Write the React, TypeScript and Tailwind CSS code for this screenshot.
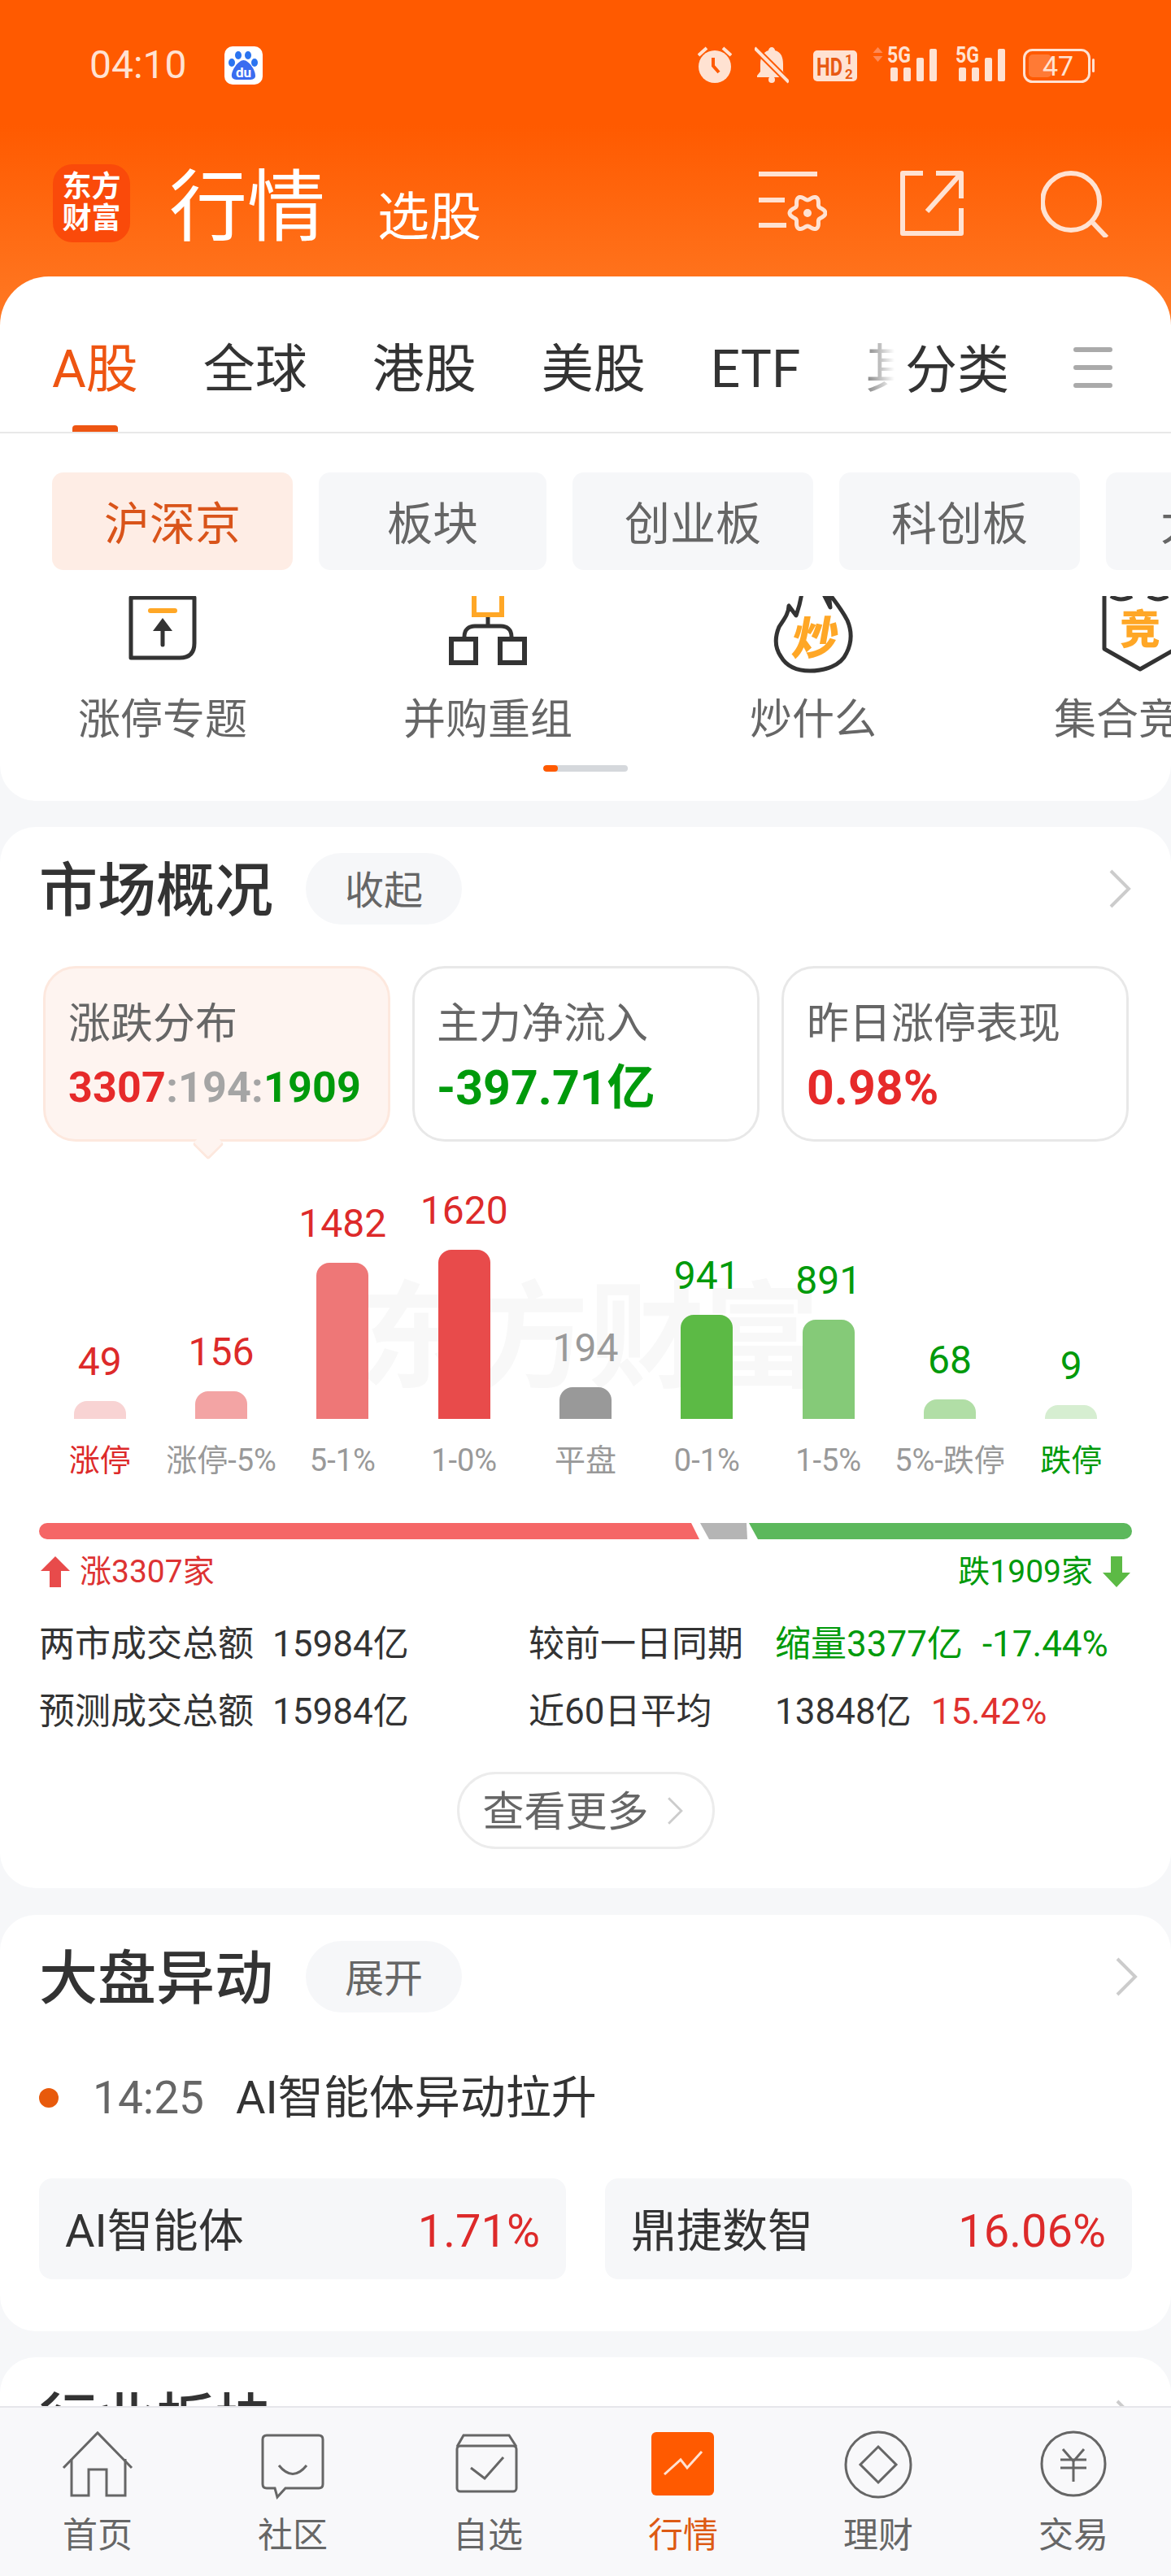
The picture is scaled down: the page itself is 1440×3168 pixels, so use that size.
import React from "react";

const cream = "#ffe2d2";

function gearPath(cx: number, cy: number) {
  const pts: string[] = [];
  for (let i = 0; i <= 120; i++) {
    const t = (i / 120) * Math.PI * 2;
    const r = 19 + 3 * Math.cos(6 * t);
    pts.push(`${i === 0 ? "M" : "L"}${(cx + r * Math.cos(t)).toFixed(2)} ${(cy + r * Math.sin(t)).toFixed(2)}`);
  }
  return pts.join(" ") + "Z";
}

function Chevron({ className }: { className: string }) {
  return (
    <svg viewBox="0 0 28 48" className={className} fill="none">
      <path d="M3 2L25 24L3 46" stroke="#cccccc" strokeWidth="4" />
    </svg>
  );
}

function Signal({ arrows }: { arrows: boolean }) {
  const off = arrows ? 18 : 0;
  return (
    <svg width={arrows ? 79 : 61} height="50" viewBox={`0 0 ${arrows ? 79 : 61} 50`}>
      {arrows && (
        <>
          <path d="M6.5 3L12.5 10H0.5Z" fill="#ff8a55" />
          <path d="M6.5 21L12.5 14H0.5Z" fill="#ff8a55" />
        </>
      )}
      <text x={off} y="22" fontSize="28" fontWeight="700" fill={cream} textLength="29" lengthAdjust="spacingAndGlyphs">5G</text>
      {[0, 16, 32, 48].map((x, i) => (
        <rect key={x} x={x + off + 4} y={[28, 28, 16, 5][i]} width="9" height={[17, 17, 29, 40][i]} rx="2" fill={cream} />
      ))}
    </svg>
  );
}

function StatusBar() {
  return (
    <div className="flex items-center h-[50px] mt-[55px] pl-[110px] pr-[93px]">
      <span className="text-[48px] leading-[50px]" style={{ color: cream }}>04:10</span>
      <svg width="47" height="47" viewBox="0 0 47 47" className="ml-[46px]">
        <rect width="47" height="47" rx="10" fill="#ffffff" />
        <ellipse cx="9" cy="20" rx="4" ry="5" fill="#2b74f0" />
        <ellipse cx="17" cy="11" rx="4" ry="5" fill="#2b74f0" />
        <ellipse cx="29" cy="11" rx="4" ry="5" fill="#2b74f0" />
        <ellipse cx="37" cy="20" rx="4" ry="5" fill="#2b74f0" />
        <path d="M23.5 17C30 17 39 30 38 37C37 42 30 41 23.5 41C17 41 10 42 9 37C8 30 17 17 23.5 17Z" fill="#3a6cf0" />
        <text x="23.5" y="38" textAnchor="middle" fontSize="17" fontWeight="700" fill="#ffffff">du</text>
      </svg>
      <div className="ml-auto flex items-center">
        <svg width="42" height="50" viewBox="0 0 42 50">
          <ellipse cx="21" cy="27" rx="20" ry="20" fill={cream} />
          <path d="M1 13L11 4M41 13L31 4" stroke={cream} strokeWidth="4" />
          <path d="M19 16V26L26 34" stroke="#ff5a00" strokeWidth="4" fill="none" />
        </svg>
        <svg width="42" height="50" viewBox="0 0 42 50" className="ml-[28px]">
          <path d="M21 3C23 3 25 5 25 7C33 9 35 16 35 24V33L39 38V40H3V38L7 33V24C7 16 10 9 17 7C17 5 19 3 21 3Z" fill={cream} />
          <circle cx="21" cy="43" r="4" fill={cream} />
          <path d="M0 4L42 46" stroke="#ff5a00" strokeWidth="8" />
          <path d="M0 4L42 46" stroke={cream} strokeWidth="4" />
        </svg>
        <svg width="54" height="50" viewBox="0 0 54 50" className="ml-[30px]">
          <rect x="0" y="7" width="54" height="38" rx="5" fill={cream} />
          <text x="4" y="38" fontSize="32" fontWeight="700" fill="#e85a12" textLength="32" lengthAdjust="spacingAndGlyphs">HD</text>
          <text x="44" y="24" textAnchor="middle" fontSize="17" fontWeight="700" fill="#e85a12">1</text>
          <text x="44" y="42" textAnchor="middle" fontSize="17" fontWeight="700" fill="#e85a12">2</text>
        </svg>
        <div className="ml-[19px]"><Signal arrows /></div>
        <div className="ml-[23px]"><Signal arrows={false} /></div>
        <svg width="89" height="50" viewBox="0 0 89 50" className="ml-[22px]">
          <rect x="1.5" y="6.5" width="80" height="39" rx="10" fill="none" stroke={cream} strokeWidth="3" />
          <rect x="7" y="12" width="28" height="28" rx="5" fill="#ff7a35" />
          <text x="43" y="38" textAnchor="middle" fontSize="34" fill={cream}>47</text>
          <rect x="85" y="17" width="3" height="17" rx="1.5" fill={cream} />
        </svg>
      </div>
    </div>
  );
}

function Toolbar() {
  return (
    <div className="flex items-center mt-[97px] h-[96px] pl-[65px] pr-[76px]">
      <div className="w-[95px] h-[96px] rounded-[24px] bg-[#fa4a0a] flex flex-col items-center justify-center text-white font-bold text-[36px] leading-[39px]">
        <span>东方</span>
        <span>财富</span>
      </div>
      <span className="ml-[48px] mt-[10px] text-[96px] leading-[96px] text-white">行情</span>
      <span className="ml-[64px] mt-[36px] text-[64px] leading-[66px] text-white">选股</span>
      <div className="ml-auto flex items-center">
        <svg width="84" height="84" viewBox="0 0 84 84" fill="none" stroke={cream}>
          <path d="M0 6H72M0 38H32M0 69H34" strokeWidth="6" />
          <path d={gearPath(60, 54)} strokeWidth="5" />
          <circle cx="60" cy="54" r="5" fill={cream} stroke="none" />
        </svg>
        <svg width="84" height="84" viewBox="0 0 84 84" fill="none" stroke={cream} className="ml-[90px]">
          <path d="M28 5H3V79H75V48M44 5H75V36M75 5L33 52" strokeWidth="6" strokeLinejoin="round" />
        </svg>
        <svg width="84" height="84" viewBox="0 0 84 84" fill="none" stroke={cream} className="ml-[89px]">
          <circle cx="37" cy="40" r="35" strokeWidth="6" />
          <path d="M64 66L81 84" strokeWidth="6" />
        </svg>
      </div>
    </div>
  );
}

function Tabs() {
  const tabs = ["全球", "港股", "美股", "ETF", "其他"];
  return (
    <div className="relative flex items-center h-[193px] pt-[39px] border-b-2 border-[#e8e8e8] text-[64px] leading-[80px] text-[#333333] overflow-hidden">
      <div className="flex gap-[80px] pl-[64px] w-[1100px] shrink-0 overflow-hidden">
        <span className="text-[#ee5512] shrink-0">A股</span>
        {tabs.map((t) => (
          <span key={t} className="shrink-0">{t}</span>
        ))}
      </div>
      <div className="absolute left-[1065px] top-0 w-[35px] h-full bg-gradient-to-r from-white/40 to-white" />
      <div className="absolute left-[1100px] top-0 w-[20px] h-full bg-white" />
      <span className="absolute left-[1113px] top-[76px]">分类</span>
      <div className="absolute left-[1320px] top-[87px] w-[48px] flex flex-col gap-[16px]">
        <div className="h-[6px] rounded-full bg-[#aaaaaa]" />
        <div className="h-[6px] rounded-full bg-[#aaaaaa]" />
        <div className="h-[6px] rounded-full bg-[#aaaaaa]" />
      </div>
      <div className="absolute left-[89px] bottom-0 w-[56px] h-[8px] rounded-t-[4px] bg-[#ee5512]" />
    </div>
  );
}

function Chips() {
  const chips = [
    { t: "沪深京", w: "w-[296px]", a: true },
    { t: "板块", w: "w-[280px]", a: false },
    { t: "创业板", w: "w-[296px]", a: false },
    { t: "科创板", w: "w-[296px]", a: false },
  ];
  return (
    <div className="flex gap-[32px] mt-[48px] ml-[64px] w-[1376px] overflow-hidden">
      {chips.map((c) => (
        <div
          key={c.t}
          className={`${c.w} shrink-0 h-[120px] pt-[8px] rounded-[14px] flex items-center justify-center text-[56px] ${c.a ? "bg-[#feede5] text-[#d9541a]" : "bg-[#f6f7f9] text-[#666666]"}`}
        >
          {c.t}
        </div>
      ))}
      <div className="w-[200px] shrink-0 h-[120px] pt-[8px] rounded-[14px] bg-[#f6f7f9] pl-[67px] flex items-center text-[56px] text-[#666666] whitespace-nowrap">大盘</div>
    </div>
  );
}

function Shortcuts() {
  const box = "w-[96px] h-[96px]";
  const items = [
    {
      t: "涨停专题",
      i: (
        <svg viewBox="0 0 96 96" className={box} fill="none">
          <path d="M9 2H87V58Q87 76 69 76H9Z" stroke="#333333" strokeWidth="5" strokeLinejoin="round" />
          <path d="M33 18H63" stroke="#ffa726" strokeWidth="6" strokeLinecap="round" />
          <path d="M48 27L36 43H60Z" fill="#333333" />
          <path d="M48 40V60" stroke="#333333" strokeWidth="5" strokeLinecap="round" />
        </svg>
      ),
    },
    {
      t: "并购重组",
      i: (
        <svg viewBox="0 0 96 96" className={box} fill="none">
          <path d="M31 -6V23H65V-6" stroke="#ffa726" strokeWidth="6" />
          <path d="M48 26V37M19 50C19 41 25 37 32 37H64C71 37 77 41 77 50" stroke="#333333" strokeWidth="5" />
          <rect x="3" y="53" width="30" height="29" stroke="#333333" strokeWidth="6" />
          <rect x="63" y="53" width="30" height="29" stroke="#333333" strokeWidth="6" />
        </svg>
      ),
    },
    {
      t: "炒什么",
      i: (
        <svg viewBox="0 0 104 96" className="w-[104px] h-[96px]" fill="none">
          <path d="M38 -4C36 10 33 18 31 24L22 12C22 22 15 30 10 38C5 50 4 62 12 74C20 88 34 92 48 92C66 92 86 86 93 70C100 56 100 44 94 30C88 18 80 8 71 -4L73 14L64 -4" stroke="#333333" strokeWidth="5" strokeLinejoin="round" />
          <text x="52" y="72" textAnchor="middle" fontSize="56" fontWeight="900" fill="#ffa726" transform="skewX(-10) translate(12 0)">炒</text>
        </svg>
      ),
    },
    {
      t: "集合竞价",
      i: (
        <svg viewBox="0 0 96 96" className={box} fill="none">
          <path d="M6 -6V65L50 90L94 65V-6" stroke="#333333" strokeWidth="5" strokeLinejoin="round" />
          <path d="M14 0Q26 8 40 0M60 0Q72 8 84 0" stroke="#333333" strokeWidth="5" />
          <text x="50" y="59" textAnchor="middle" fontSize="50" fontWeight="900" fill="#ffa726">竞</text>
        </svg>
      ),
    },
  ];
  return (
    <div className="flex mt-[32px]">
      {items.map((it) => (
        <div key={it.t} className="w-[400px] shrink-0 flex flex-col items-center">
          <div className="h-[96px]">{it.i}</div>
          <span className="mt-[27px] text-[52px] leading-[60px] text-[#666666] whitespace-nowrap">{it.t}</span>
        </div>
      ))}
    </div>
  );
}

function SectionHead({ title, pill, right }: { title: string; pill?: string; right: string }) {
  return (
    <div className="flex items-center pl-[48px] pt-[32px] h-[120px]">
      <span className="text-[72px] leading-[80px] pt-[6px] font-medium text-[#333333]">{title}</span>
      {pill && (
        <span className="ml-[40px] w-[192px] h-[88px] pt-[5px] rounded-full bg-[#f6f7f9] flex items-center justify-center text-[48px] text-[#666666]">{pill}</span>
      )}
      <Chevron className={`ml-auto w-[28px] h-[48px] ${right}`} />
    </div>
  );
}

function SummaryCards() {
  const red = "text-[#e62a2a]";
  const green = "text-[#009a0b]";
  return (
    <div className="flex gap-[27px] ml-[53px] mt-[51px]">
      <div className="relative w-[427px] h-[216px] rounded-[40px] border-[3px] border-[#fde8de] bg-[#fef4f0] pl-[28px] pt-[36px]">
        <div className="text-[52px] leading-[66px] text-[#666666]">涨跌分布</div>
        <div className="mt-[12px] text-[52px] leading-[66px] font-bold tracking-[0.2px] whitespace-nowrap">
          <span className={red}>3307</span>
          <span className="text-[#a5a5a5]">:194:</span>
          <span className={green}>1909</span>
        </div>
        <div className="absolute left-[186px] bottom-[-20px] w-[28px] h-[28px] rotate-45 rounded-[4px] bg-[#fef4f0] border-r-[3px] border-b-[3px] border-[#fde8de]" />
      </div>
      <div className="w-[427px] h-[216px] rounded-[40px] border-[3px] border-[#e8e8e8] pl-[27px] pt-[36px]">
        <div className="text-[52px] leading-[66px] text-[#666666]">主力净流入</div>
        <div className={`mt-[12px] text-[59px] leading-[66px] font-bold ${green}`}>-397.71亿</div>
      </div>
      <div className="w-[427px] h-[216px] rounded-[40px] border-[3px] border-[#e8e8e8] pl-[28px] pt-[36px]">
        <div className="text-[52px] leading-[66px] text-[#666666]">昨日涨停表现</div>
        <div className={`mt-[12px] text-[59px] leading-[66px] font-bold ${red}`}>0.98%</div>
      </div>
    </div>
  );
}

const bars = [
  { v: "49", l: "涨停", h: 22, c: "#f8d3d3", vc: "#dd2a2a", lc: "#dd2a2a" },
  { v: "156", l: "涨停-5%", h: 34, c: "#f3a4a4", vc: "#dd2a2a", lc: "#999999" },
  { v: "1482", l: "5-1%", h: 192, c: "#ee7777", vc: "#dd2a2a", lc: "#999999" },
  { v: "1620", l: "1-0%", h: 208, c: "#e84b4b", vc: "#dd2a2a", lc: "#999999" },
  { v: "194", l: "平盘", h: 39, c: "#999999", vc: "#999999", lc: "#999999" },
  { v: "941", l: "0-1%", h: 128, c: "#5cba45", vc: "#009a0b", lc: "#999999" },
  { v: "891", l: "1-5%", h: 122, c: "#85ca78", vc: "#009a0b", lc: "#999999" },
  { v: "68", l: "5%-跌停", h: 24, c: "#b1dea6", vc: "#009a0b", lc: "#999999" },
  { v: "9", l: "跌停", h: 17, c: "#d6eed1", vc: "#009a0b", lc: "#009a0b" },
];

function Chart() {
  return (
    <div className="relative ml-[48px] mt-[46px] w-[1344px]">
      <div className="absolute left-[392px] top-[126px] text-[142px] leading-[142px] font-bold text-[#f8f8f8] whitespace-nowrap">东方财富</div>
      <div className="relative grid grid-cols-9 h-[295px] items-end">
        {bars.map((b) => (
          <div key={b.l} className="flex flex-col items-center">
            <span className="text-[48px] leading-[48px] mb-[24px]" style={{ color: b.vc }}>{b.v}</span>
            <div className="w-[64px] rounded-t-[16px]" style={{ height: b.h, backgroundColor: b.c }} />
          </div>
        ))}
      </div>
      <div className="relative grid grid-cols-9 mt-[26px]">
        {bars.map((b) => (
          <span key={b.l} className="text-center text-[38px] leading-[50px] whitespace-nowrap" style={{ color: b.lc }}>{b.l}</span>
        ))}
      </div>
    </div>
  );
}

function SplitBar() {
  return (
    <svg viewBox="0 0 1344 20" className="block ml-[48px] mt-[52px] w-[1344px] h-[20px]">
      <path d="M10 0H802L812 20H10A10 10 0 0 1 10 0Z" fill="#f56666" />
      <path d="M813 0H870L871 20H824Z" fill="#b5b5b5" />
      <path d="M873 0H1334A10 10 0 0 1 1334 20H884Z" fill="#5cb85c" />
    </svg>
  );
}

function Market() {
  const row = "flex items-center h-[83px] text-[44px] text-[#333333] whitespace-nowrap";
  return (
    <div className="mt-[32px] h-[1305px] bg-white rounded-[44px]">
      <SectionHead title="市场概况" pill="收起" right="mr-[49px]" />
      <SummaryCards />
      <Chart />
      <SplitBar />
      <div className="flex items-center justify-between h-[48px] mt-[16px] mx-[50px] text-[39px]">
        <div className="flex items-center gap-[12px] text-[#dd3333]">
          <svg width="36" height="38" viewBox="0 0 36 38"><path d="M18 0L36 18H25V38H11V18H0Z" fill="#e84b4b" /></svg>
          <span>涨3307家</span>
        </div>
        <div className="flex items-center gap-[12px] text-[#009a0b]">
          <span>跌1909家</span>
          <svg width="34" height="38" viewBox="0 0 34 38"><path d="M17 38L34 20H24V0H10V20H0Z" fill="#5cba45" /></svg>
        </div>
      </div>
      <div className="mt-[23px] ml-[48px]">
        <div className={row}>
          <span className="w-[287px]">两市成交总额</span>
          <span className="w-[315px]">15984亿</span>
          <span className="w-[303px]">较前一日同期</span>
          <span className="text-[#009a0b]">缩量3377亿</span>
          <span className="ml-[24px] text-[#009a0b]">-17.44%</span>
        </div>
        <div className={row}>
          <span className="w-[287px]">预测成交总额</span>
          <span className="w-[315px]">15984亿</span>
          <span className="w-[303px]">近60日平均</span>
          <span>13848亿</span>
          <span className="ml-[24px] text-[#e0312f]">15.42%</span>
        </div>
      </div>
      <div className="mt-[33px] mx-auto w-[317px] h-[95px] rounded-full border-[3px] border-[#ececec] flex items-center pl-[29px] text-[51px] text-[#666666]">
        <span className="pt-[6px]">查看更多</span>
        <Chevron className="ml-[22px] w-[20px] h-[36px]" />
      </div>
    </div>
  );
}

function Movement() {
  const tile = "flex items-center justify-between w-[648px] h-[124px] pt-[5px] rounded-[16px] bg-[#f6f7f9] px-[32px] text-[56px]";
  return (
    <div className="mt-[33px] h-[512px] bg-white rounded-[44px]">
      <SectionHead title="大盘异动" pill="展开" right="mr-[41px]" />
      <div className="flex items-center h-[64px] mt-[73px] ml-[48px] whitespace-nowrap">
        <div className="w-[24px] h-[24px] rounded-full bg-[#e85a0c]" />
        <span className="ml-[42px] text-[55px] text-[#666666]">14:25</span>
        <span className="ml-[39px] text-[56px] text-[#333333]">AI智能体异动拉升</span>
      </div>
      <div className="flex justify-between mt-[67px] mx-[48px]">
        <div className={tile}>
          <span className="text-[#333333]">AI智能体</span>
          <span className="text-[#dd2a2a]">1.71%</span>
        </div>
        <div className={tile}>
          <span className="text-[#333333]">鼎捷数智</span>
          <span className="text-[#dd2a2a]">16.06%</span>
        </div>
      </div>
    </div>
  );
}

function BottomNav() {
  const g = { fill: "none", stroke: "#666666", strokeWidth: 3 };
  const items = [
    {
      t: "首页",
      i: (
        <svg viewBox="0 0 96 96" className="w-[96px] h-[96px]" {...g}>
          <path d="M6 50L48 7L90 50" />
          <path d="M16 39V84H37V52H59V84H82V39" />
        </svg>
      ),
    },
    {
      t: "社区",
      i: (
        <svg viewBox="0 0 96 96" className="w-[96px] h-[96px]" {...g}>
          <path d="M16 10H80Q85 10 85 15V70Q85 75 80 75H39L29 86L26 75H16Q11 75 11 70V15Q11 10 16 10Z" />
          <path d="M31 47Q48 68 65 47" />
        </svg>
      ),
    },
    {
      t: "自选",
      i: (
        <svg viewBox="0 0 96 96" className="w-[96px] h-[96px]" {...g}>
          <path d="M10 24L18 10H74L83 24" />
          <rect x="10" y="23" width="73" height="56" rx="4" />
          <path d="M27 50L44 63L67 37" />
        </svg>
      ),
    },
    {
      t: "行情",
      a: true,
      i: (
        <svg viewBox="0 0 96 96" className="w-[96px] h-[96px]" fill="none">
          <rect x="9" y="6" width="77" height="78" rx="6" fill="#ff5a00" />
          <path d="M25 58L45 40L53 50L71 30" stroke="#ffe2d2" strokeWidth="3" />
        </svg>
      ),
    },
    {
      t: "理财",
      i: (
        <svg viewBox="0 0 96 96" className="w-[96px] h-[96px]" {...g}>
          <circle cx="48" cy="46" r="40" />
          <path d="M48 24L70 46L48 68L26 46Z" />
        </svg>
      ),
    },
    {
      t: "交易",
      i: (
        <svg viewBox="0 0 96 96" className="w-[96px] h-[96px]" {...g}>
          <circle cx="48" cy="45" r="39" />
          <path d="M35 27L48 42L61 27M32 40H64M32 50H64M48 40V67" />
        </svg>
      ),
    },
  ];
  return (
    <div className="h-[209px] shrink-0 border-t-2 border-[#e6e6ea] bg-[#f8f8fa] grid grid-cols-6 pt-[24px]">
      {items.map((it) => (
        <div key={it.t} className="flex flex-col items-center">
          {it.i}
          <span className={`mt-[12px] text-[43px] leading-[50px] ${it.a ? "text-[#dd5a14]" : "text-[#666666]"}`}>{it.t}</span>
        </div>
      ))}
    </div>
  );
}

export default function App() {
  return (
    <div className="w-[1440px] h-[3168px] overflow-hidden flex flex-col bg-[#f6f7f9] [font-family:Roboto,'Noto_Sans_CJK_SC',sans-serif]">
      <div className="flex-1 overflow-hidden">
        <div className="h-[403px] bg-[linear-gradient(180deg,#ff5a00_0%,#ff5a00_38%,#ff7a25_100%)] overflow-hidden">
          <StatusBar />
          <Toolbar />
        </div>
        <div className="-mt-[63px] relative h-[645px] bg-white rounded-t-[60px] rounded-b-[44px] overflow-hidden">
          <Tabs />
          <Chips />
          <Shortcuts />
          <div className="relative mt-[25px] ml-[668px] w-[104px] h-[8px] rounded-full bg-[#d5d8dc] overflow-hidden">
            <div className="w-[18px] h-full rounded-full bg-[#ff5a00]" />
          </div>
        </div>
        <Market />
        <Movement />
        <div className="mt-[32px] h-[300px] bg-white rounded-t-[44px]">
          <div className="flex items-center pl-[48px] pt-[32px] h-[120px]">
            <span className="text-[72px] leading-[80px] pt-[6px] font-medium text-[#333333]">行业板块</span>
            <Chevron className="ml-auto w-[28px] h-[48px] mr-[41px]" />
          </div>
        </div>
      </div>
      <BottomNav />
    </div>
  );
}
